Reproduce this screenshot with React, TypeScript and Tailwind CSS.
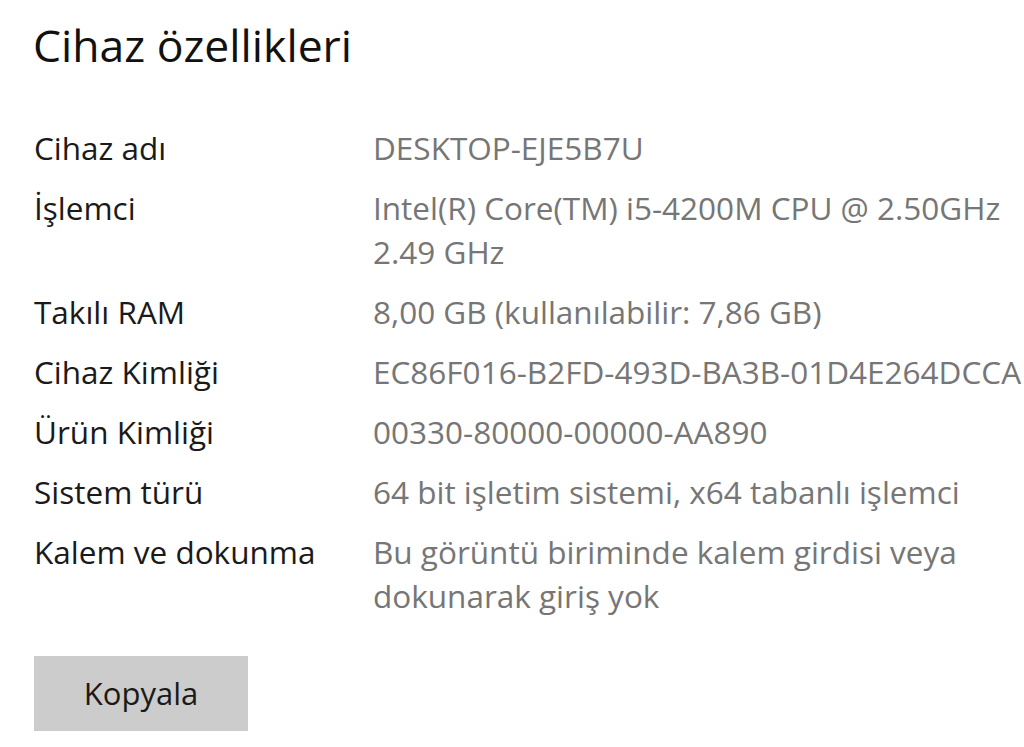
import React from 'react';

const rows: { label: string; value: string[] }[] = [
  { label: 'Cihaz adı', value: ['DESKTOP-EJE5B7U'] },
  { label: 'İşlemci', value: ['Intel(R) Core(TM) i5-4200M CPU @ 2.50GHz', '2.49 GHz'] },
  { label: 'Takılı RAM', value: ['8,00 GB (kullanılabilir: 7,86 GB)'] },
  { label: 'Cihaz Kimliği', value: ['EC86F016-B2FD-493D-BA3B-01D4E264DCCA'] },
  { label: 'Ürün Kimliği', value: ['00330-80000-00000-AA890'] },
  { label: 'Sistem türü', value: ['64 bit işletim sistemi, x64 tabanlı işlemci'] },
  { label: 'Kalem ve dokunma', value: ['Bu görüntü biriminde kalem girdisi veya', 'dokunarak giriş yok'] },
];

export default function App() {
  return (
    <div className="w-[1024px] h-[747px] overflow-hidden bg-white pl-[33px] font-['Open_Sans',sans-serif]">
      <h1 className="mt-[15px] text-[44.5px] leading-[60px] font-normal text-[#111]">Cihaz özellikleri</h1>

      <div className="mt-[51px] flex flex-col gap-[16px] text-[31.5px] leading-[44px]">
        {rows.map((r) => (
          <div key={r.label} className="flex">
            <div className="w-[340px] shrink-0 pl-[1px] text-[#1a1a1a]">{r.label}</div>
            <div className="text-[#767676] whitespace-nowrap">
              {r.value.map((v) => (
                <div key={v}>{v}</div>
              ))}
            </div>
          </div>
        ))}
      </div>

      <button className="mt-[38px] ml-[1px] w-[214px] h-[75px] bg-[#cccccc] text-[31px] text-[#1a1a1a]">
        Kopyala
      </button>
    </div>
  );
}
